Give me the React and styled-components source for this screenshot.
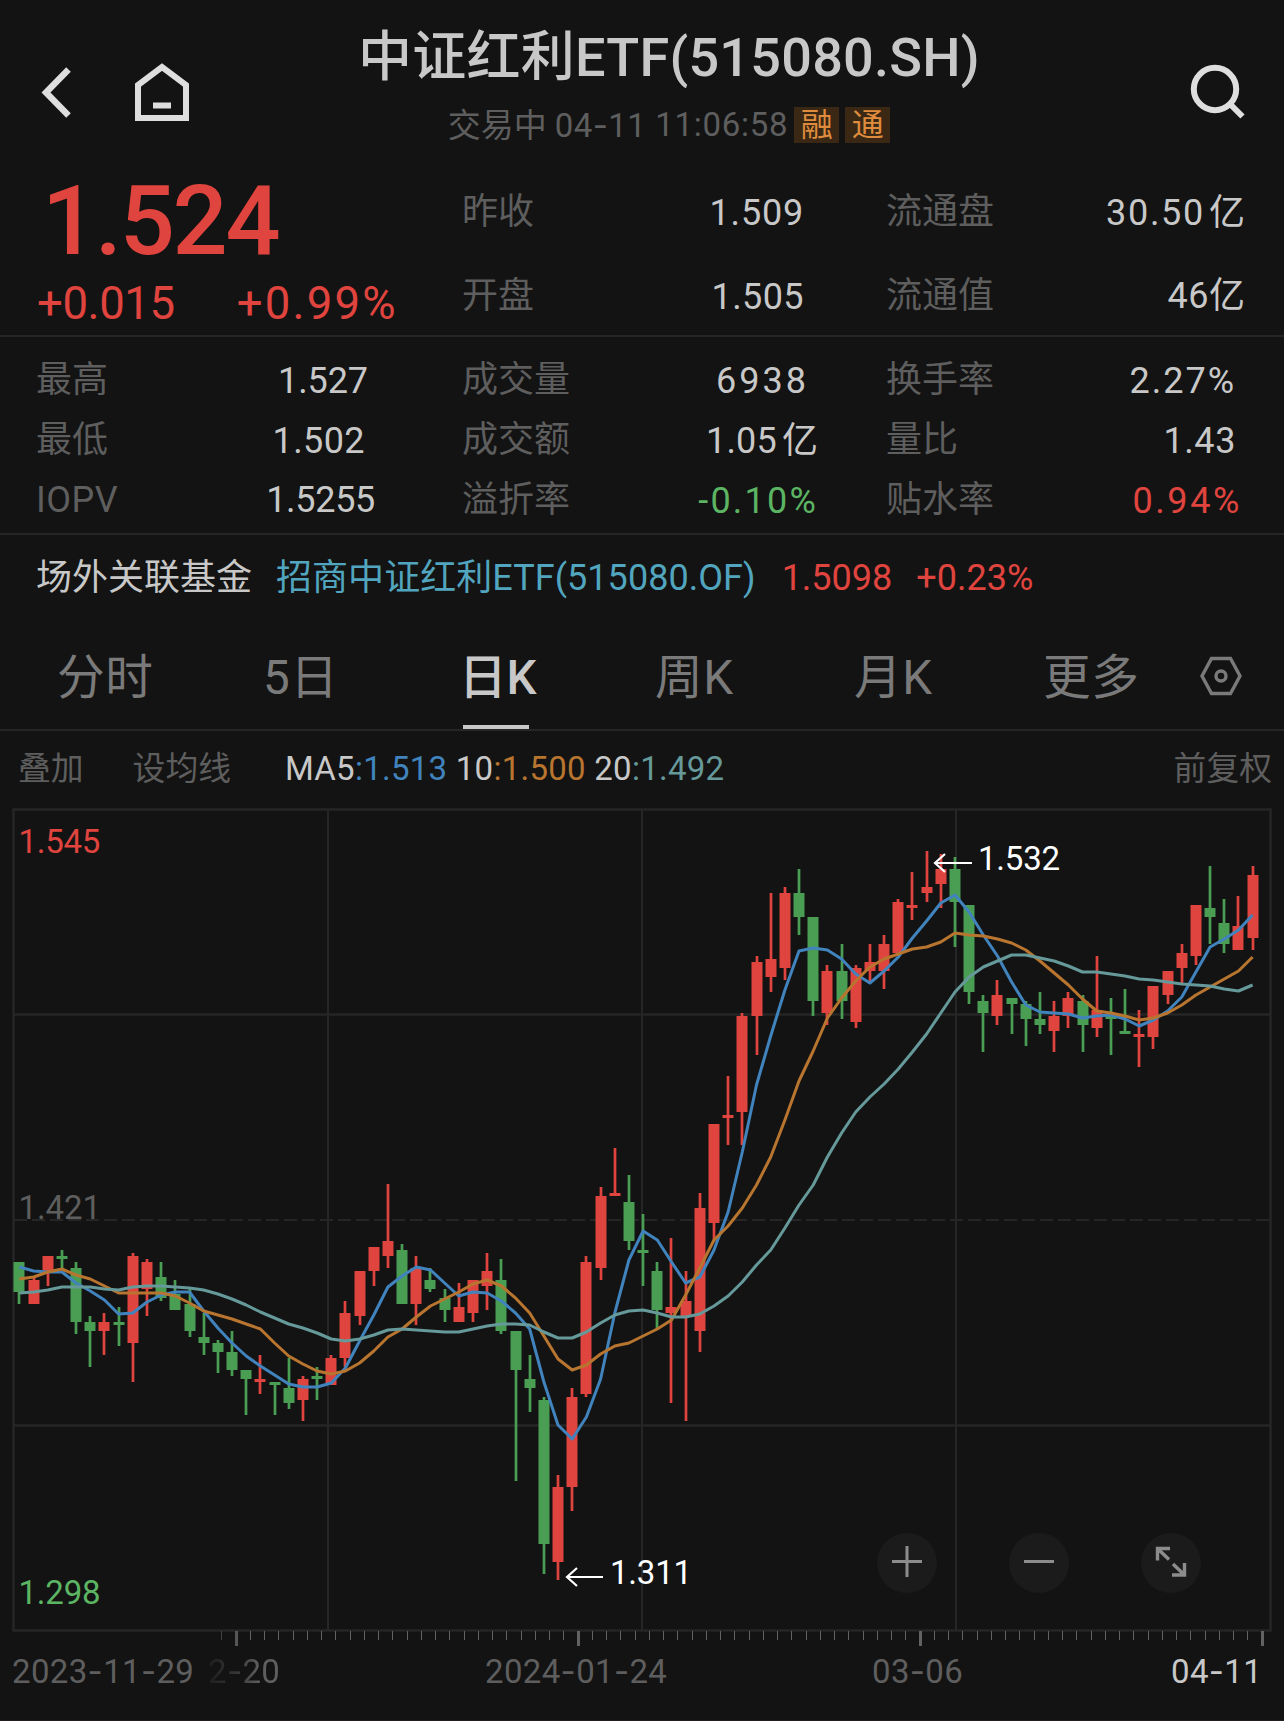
import React from "react";
import styled, { createGlobalStyle, ThemeProvider } from "styled-components";

const theme = {
  bg: "#131313",
  line: "#262626",
  text: "#c8c8c8",
  muted: "#5e5e5e",
  tab: "#7a7a7a",
  up: "#e0443e",
  down: "#4a9e54",
  downText: "#5cb563",
  link: "#52a5be",
  ma5: "#4183bd",
  ma10: "#b8752f",
  ma20: "#66999a",
};

const FONT = `Roboto, "Noto Sans CJK SC", sans-serif`;

const GlobalStyle = createGlobalStyle`
  * { box-sizing: border-box; }
  body {
    margin: 0;
    background: ${theme.bg};
  }
`;

const Page = styled.div`
  width: 1284px;
  height: 1721px;
  overflow: hidden;
  display: flex;
  flex-direction: column;
  background: ${({ theme }) => theme.bg};
  color: ${({ theme }) => theme.text};
  font-family: ${FONT};
  font-size: 36px;
  white-space: nowrap;
  border-bottom: 1px solid #241e1f;
`;

const Header = styled.header`
  height: 156px;
  display: grid;
  grid-template-columns: 220px 1fr 166px;
`;

const NavIcons = styled.div`
  display: flex;
  align-items: flex-start;
  gap: 63px;
  padding: 61px 0 0 40px;
`;

const SearchSlot = styled.div`
  padding: 61px 0 0 70px;
`;

const Titles = styled.div`
  display: flex;
  flex-direction: column;
  align-items: center;
  padding-top: 28px;
`;

const Title = styled.h1`
  margin: 0;
  font-size: 54px;
  line-height: 60px;
  font-weight: 500;
  letter-spacing: 0.25px;
`;

const Subtitle = styled.div`
  display: flex;
  align-items: center;
  margin-top: 19px;
  height: 36px;
  font-size: 33px;
  line-height: 38px;
  color: ${({ theme }) => theme.muted};
`;

const Hyphen = styled.span`
  font-family: Inter, sans-serif;
`;

const Status = styled.span`
  margin-right: 8px;
  padding-top: 1px;
`;

const Today = styled.span`
  letter-spacing: 0.4px;
`;

const Clock = styled.span`
  margin-left: 9px;
  letter-spacing: 0.7px;
`;

const Badge = styled.span`
  width: 45px;
  height: 36px;
  margin-left: 6px;
  text-align: center;
  font-size: 32px;
  line-height: 36px;
  background: #3b2814;
  color: #df8c3e;
`;

const Quote = styled.section`
  height: 181px;
  display: grid;
  grid-template-columns: 462px 424px 1fr;
  border-bottom: 2px solid ${({ theme }) => theme.line};
`;

const PriceBlock = styled.div`
  color: ${({ theme }) => theme.up};
`;

const Price = styled.div`
  padding: 10px 0 0 42px;
  font-size: 97px;
  line-height: 110px;
  font-weight: 500;
  letter-spacing: -2.2px;
`;

const Changes = styled.div`
  display: flex;
  gap: 62px;
  padding: 2.5px 0 0 37px;
  font-size: 45.5px;
  line-height: 50px;
`;

const Change = styled.span`
  letter-spacing: ${({ $spacing }) => $spacing}px;
`;

const QuoteColumn = styled.div`
  padding-top: 14px;
`;

const Stats = styled.section`
  height: 198px;
  padding: 13px 0 0 36px;
  display: grid;
  grid-template-columns: 426px 424px 1fr;
  grid-auto-rows: 60px;
  border-bottom: 2px solid ${({ theme }) => theme.line};
`;

const Cell = styled.div`
  height: ${({ $tall }) => ($tall ? 84 : 60)}px;
  display: flex;
  justify-content: space-between;
  align-items: center;
  line-height: 60px;
`;

const Label = styled.span`
  letter-spacing: ${({ $spacing }) => $spacing || 0}px;
  color: ${({ theme }) => theme.muted};
`;

const Value = styled.span`
  padding-top: ${({ $raised }) => ($raised ? 0 : 2)}px;
  margin-right: ${({ $inset }) => $inset}px;
  letter-spacing: ${({ $spacing }) => $spacing ?? 1}px;
  color: ${({ $tone, theme }) => ($tone ? theme[$tone] : theme.text)};
`;

const Unit = styled.span`
  margin-left: ${({ $gap }) => $gap || 0}px;
  letter-spacing: 0;
`;

const Related = styled.section`
  height: 86px;
  display: flex;
  align-items: center;
  padding-left: 36px;
  line-height: 50px;
`;

const FundLink = styled.a`
  margin-left: 24px;
  letter-spacing: 0.05px;
  color: ${({ theme }) => theme.link};
`;

const FundValue = styled.span`
  margin-left: ${({ $gap }) => $gap}px;
  color: ${({ theme }) => theme.up};
`;

const Tabs = styled.nav`
  height: 110px;
  display: grid;
  grid-template-columns: 206px 196px 196px 199px 189px 156px auto;
  padding-left: 57px;
  border-bottom: 2px solid ${({ theme }) => theme.line};
`;

const Tab = styled.div`
  position: relative;
  padding-top: 31px;
  font-size: 47.6px;
  line-height: 52px;
  color: ${({ $active, theme }) => ($active ? theme.text : theme.tab)};
  font-weight: ${({ $active }) => ($active ? 500 : 400)};
  letter-spacing: ${({ $active }) => ($active ? 0 : 0.6)}px;

  &::after {
    content: "";
    display: ${({ $active }) => ($active ? "block" : "none")};
    position: absolute;
    left: 4px;
    bottom: 0;
    width: 66px;
    height: 4px;
    background: ${({ theme }) => theme.text};
  }
`;

const TabIcon = styled.div`
  padding-top: 35px;
`;

const Toolbar = styled.div`
  height: 75px;
  display: flex;
  align-items: center;
  padding: 0 12px 0 18px;
  font-size: 33px;
  line-height: 40px;
  color: ${({ theme }) => theme.text};
`;

const Tool = styled.span`
  font-size: 32.8px;
  margin-right: ${({ $gap }) => $gap || 0}px;
  margin-left: ${({ $push }) => ($push ? "auto" : 0)};
  color: ${({ theme }) => theme.muted};
`;

const Ma = styled.span`
  margin-right: 8.5px;
  letter-spacing: 0.25px;

  b {
    font-weight: 400;
    color: ${({ $tone, theme }) => theme[$tone]};
  }
`;

const ChartArea = styled.section`
  position: relative;
  height: 847px;

  svg {
    display: block;
  }
`;

const ChartButtons = styled.div`
  position: absolute;
  left: 877px;
  top: 727px;
  display: flex;
  gap: 72px;
`;

const RoundButton = styled.button`
  width: 60px;
  height: 60px;
  padding: 0 0 2px;
  border: 0;
  border-radius: 50%;
  background: #1b1b1b;
  display: grid;
  place-items: center;
`;

const Dates = styled.div`
  display: grid;
  grid-template-columns: 196px 277px 387px 299px auto;
  padding-left: 12px;
  font-size: 33px;
  line-height: 36px;
  letter-spacing: 0.35px;
  color: ${({ theme }) => theme.muted};
`;

const DateLabel = styled.span`
  color: ${({ $current, theme }) => ($current ? theme.text : "inherit")};
  mask-image: ${({ $fade }) =>
    $fade ? "linear-gradient(90deg, rgba(0,0,0,.15), rgba(0,0,0,.5) 30px, #000 50px)" : "none"};
`;

// [direction, body top, body bottom, high, low]
const CANDLES = [
  ["d", 1262, 1292, 1262, 1304], ["u", 1280, 1304, 1278, 1304], ["u", 1256, 1273, 1256, 1286],
  ["d", 1256, 1259, 1250, 1270], ["d", 1268, 1322, 1262, 1334], ["d", 1322, 1331, 1316, 1367],
  ["u", 1322, 1331, 1313, 1355], ["d", 1322, 1325, 1307, 1346], ["u", 1256, 1343, 1253, 1382],
  ["u", 1262, 1289, 1259, 1316], ["d", 1277, 1298, 1262, 1301], ["d", 1294, 1310, 1280, 1310],
  ["d", 1304, 1331, 1288, 1337], ["d", 1337, 1343, 1313, 1355], ["d", 1343, 1352, 1340, 1373],
  ["d", 1352, 1370, 1331, 1376], ["d", 1370, 1379, 1370, 1415], ["u", 1379, 1382, 1355, 1394],
  ["d", 1382, 1385, 1382, 1415], ["d", 1388, 1403, 1358, 1409], ["u", 1379, 1400, 1376, 1421],
  ["d", 1376, 1379, 1367, 1400], ["u", 1358, 1385, 1355, 1385], ["u", 1313, 1358, 1301, 1367],
  ["u", 1271, 1316, 1271, 1325], ["u", 1247, 1271, 1247, 1286], ["u", 1241, 1256, 1184, 1268],
  ["d", 1250, 1304, 1244, 1304], ["u", 1268, 1304, 1256, 1325], ["d", 1280, 1289, 1268, 1292],
  ["d", 1298, 1310, 1289, 1322], ["u", 1307, 1322, 1283, 1322], ["u", 1280, 1313, 1280, 1322],
  ["u", 1271, 1286, 1253, 1310], ["d", 1280, 1331, 1259, 1334], ["d", 1331, 1370, 1331, 1481],
  ["d", 1379, 1388, 1355, 1412], ["d", 1400, 1544, 1397, 1574], ["u", 1487, 1562, 1475, 1580],
  ["u", 1397, 1487, 1388, 1511], ["u", 1262, 1394, 1256, 1397], ["u", 1196, 1268, 1187, 1280],
  ["u", 1193, 1196, 1148, 1196], ["d", 1202, 1241, 1175, 1250], ["d", 1250, 1253, 1214, 1286],
  ["d", 1271, 1310, 1262, 1330], ["u", 1307, 1313, 1238, 1403], ["u", 1301, 1317, 1271, 1421],
  ["u", 1208, 1331, 1193, 1352], ["u", 1124, 1223, 1124, 1242], ["u", 1115, 1118, 1076, 1145],
  ["u", 1016, 1112, 1013, 1145], ["u", 962, 1016, 956, 1055], ["u", 959, 977, 893, 992],
  ["u", 893, 968, 887, 980], ["d", 893, 917, 869, 935], ["d", 917, 1001, 917, 1016],
  ["u", 971, 1013, 965, 1025], ["d", 971, 1001, 944, 1019], ["u", 968, 1022, 965, 1028],
  ["u", 962, 971, 944, 981], ["u", 944, 971, 935, 989], ["u", 902, 953, 899, 955],
  ["u", 905, 908, 872, 920], ["u", 887, 893, 851, 902], ["u", 869, 884, 854, 908],
  ["d", 869, 902, 857, 947], ["d", 905, 992, 905, 1004], ["d", 1001, 1013, 995, 1052],
  ["u", 995, 1016, 980, 1025], ["d", 998, 1004, 998, 1034], ["d", 1004, 1019, 1001, 1046],
  ["d", 1019, 1025, 992, 1034], ["u", 1016, 1031, 1001, 1052], ["u", 998, 1016, 992, 1028],
  ["d", 1001, 1025, 995, 1052], ["u", 1010, 1028, 956, 1037], ["d", 1016, 1019, 998, 1055],
  ["d", 1031, 1034, 989, 1034], ["u", 1034, 1037, 1010, 1067], ["u", 986, 1037, 986, 1049],
  ["u", 971, 995, 971, 1004], ["u", 953, 968, 944, 983], ["u", 905, 956, 905, 965],
  ["d", 908, 917, 866, 944], ["d", 923, 944, 899, 953], ["u", 926, 950, 896, 950],
  ["u", 875, 938, 866, 950],
];

const MA5 = [
  1267, 1271, 1272, 1272, 1283, 1291, 1300, 1314, 1313, 1302, 1295, 1292, 1292, 1311, 1328, 1343,
  1356, 1366, 1375, 1384, 1387, 1387, 1383, 1368, 1341, 1315, 1287, 1276, 1267, 1270, 1283, 1296,
  1292, 1293, 1301, 1313, 1329, 1382, 1425, 1439, 1417, 1379, 1313, 1260, 1231, 1240, 1262, 1283,
  1277, 1250, 1212, 1152, 1085, 1036, 990, 951, 948, 950, 959, 974, 983, 971, 957, 938, 921, 903,
  895, 912, 935, 956, 982, 1005, 1012, 1013, 1014, 1018, 1016, 1015, 1019, 1026, 1020, 1011, 997,
  972, 947, 939, 930, 915,
];

const MA10 = [
  1279, 1277, 1272, 1269, 1275, 1279, 1286, 1293, 1293, 1293, 1293, 1296, 1303, 1311, 1315, 1319,
  1324, 1329, 1343, 1356, 1364, 1371, 1374, 1371, 1363, 1351, 1337, 1329, 1317, 1306, 1299, 1292,
  1284, 1280, 1286, 1298, 1313, 1336, 1359, 1370, 1365, 1354, 1346, 1343, 1336, 1329, 1320, 1295,
  1268, 1240, 1226, 1208, 1185, 1157, 1120, 1081, 1051, 1018, 998, 981, 967, 959, 954, 949, 947,
  942, 933, 935, 936, 939, 943, 950, 961, 973, 985, 999, 1011, 1013, 1016, 1020, 1018, 1013, 1005,
  995, 987, 979, 971, 957,
];

const MA20 = [
  1293, 1292, 1290, 1287, 1287, 1287, 1289, 1290, 1287, 1286, 1286, 1287, 1288, 1290, 1294, 1299,
  1305, 1312, 1318, 1324, 1328, 1333, 1339, 1341, 1339, 1335, 1330, 1329, 1330, 1331, 1332, 1332,
  1329, 1326, 1324, 1324, 1325, 1332, 1338, 1338, 1332, 1323, 1315, 1311, 1310, 1313, 1317, 1317,
  1314, 1306, 1296, 1282, 1265, 1250, 1228, 1205, 1185, 1157, 1133, 1112, 1097, 1084, 1069, 1052,
  1034, 1013, 992, 977, 967, 961, 955, 955, 958, 961, 966, 972, 972, 974, 976, 979, 980, 982, 984,
  985, 986, 989, 991, 985,
];

const STEP = 14.175;
const xAt = (i) => 19.4 + i * STEP;
const toPoints = (ys) => ys.map((y, i) => `${xAt(i).toFixed(1)},${y}`).join(" ");

const TICKS = Array.from({ length: 74 }, (_, i) => ({
  x: 235.6 + (i - 1) * 14.25,
  major: (i - 1) % 24 === 0,
}));

function DateText({ children }) {
  return children.split("-").map((part, i) => (
    <React.Fragment key={i}>
      {i > 0 && <Hyphen>-</Hyphen>}
      {part}
    </React.Fragment>
  ));
}

function Candle({ data, index }) {
  const [dir, top, bottom, high, low] = data;
  const fill = dir === "u" ? theme.up : theme.down;
  const x = Math.round(xAt(index));
  return (
    <g fill={fill}>
      <rect x={x - 1.35} y={high} width="2.7" height={low - high} />
      <rect x={x - 5.5} y={top} width="11" height={bottom - top} />
    </g>
  );
}

function KLineChart() {
  return (
    <svg width="1284" height="847" viewBox="0 806 1284 847" fontFamily="Roboto, sans-serif" fontSize="33">
      <defs>
        <linearGradient id="axisFade" gradientUnits="userSpaceOnUse" x1="190" x2="245" y1="0" y2="0">
          <stop offset="0" stopColor="#626262" stopOpacity="0" />
          <stop offset="1" stopColor="#626262" />
        </linearGradient>
      </defs>
      <g stroke={theme.line} fill="none">
        <rect x="13.5" y="809.5" width="1257" height="821" strokeWidth="2.5" />
        <path d="M328 810V1630M642 810V1630M956 810V1630" strokeWidth="2" />
        <path d="M14 1014.5H1270M14 1425.5H1270" strokeWidth="2.5" />
        <path d="M14 1220H1270" strokeWidth="2" strokeDasharray="13 5" />
      </g>
      <text x="18.5" y="853" letterSpacing="-0.3" fill={theme.up}>1.545</text>
      <text x="18.5" y="1218.5" letterSpacing="-0.1" fill={theme.muted}>1.421</text>
      <text x="18.5" y="1603.5" letterSpacing="-0.2" fill={theme.downText}>1.298</text>

      {CANDLES.map((c, i) => (
        <Candle key={i} data={c} index={i} />
      ))}
      <g fill="none" strokeWidth="3" strokeLinejoin="round">
        <polyline points={toPoints(MA5)} stroke={theme.ma5} />
        <polyline points={toPoints(MA10)} stroke={theme.ma10} />
        <polyline points={toPoints(MA20)} stroke={theme.ma20} />
      </g>

      <g stroke="#fff" strokeWidth="2.2" fill="none">
        <path d="M972 863H935M945 854L935 863L945 872" />
        <path d="M603 1577H567M577 1568L567 1577L577 1586" />
      </g>
      <text x="978" y="870" letterSpacing="-0.2" fill="#fff">1.532</text>
      <text x="610" y="1584" letterSpacing="-0.2" fill="#fff">1.311</text>

      {TICKS.map(({ x, major }, i) => (
        <rect
          key={i}
          x={Math.round(x) - (major ? 1 : 0)}
          y="1631"
          width={major ? 3 : 1}
          height={major ? 15 : 9}
          fill={x < 245 ? "url(#axisFade)" : "#626262"}
        />
      ))}
    </svg>
  );
}

function BackIcon() {
  return (
    <svg width="32" height="60" viewBox="0 0 32 60" fill="none" stroke="#dedede" strokeWidth="6.4">
      <path d="M28.5 8.5L6 31.5L28.5 54.5" />
    </svg>
  );
}

function HomeIcon() {
  return (
    <svg width="54" height="60" viewBox="0 0 54 60" fill="none" stroke="#dedede" strokeWidth="6">
      <path d="M3 57V24L27 6L51 24V57Z" />
      <path d="M18 44.5H36" />
    </svg>
  );
}

function SearchIcon() {
  return (
    <svg width="60" height="62" viewBox="0 0 60 62" fill="none" stroke="#dedede" strokeWidth="6">
      <circle cx="27" cy="28" r="21.2" />
      <path d="M41.5 42.5L54.5 55.5" />
    </svg>
  );
}

function SettingsIcon() {
  return (
    <svg width="44" height="40" viewBox="0 0 44 40" fill="none" stroke={theme.tab} strokeWidth="3.4">
      <path d="M12.5 2.5H31.5L41 20L31.5 37.5H12.5L3 20Z" />
      <circle cx="22" cy="20" r="5" />
    </svg>
  );
}

const TABS = ["分时", "5日", "日K", "周K", "月K", "更多"];

export default function App() {
  return (
    <ThemeProvider theme={theme}>
      <GlobalStyle />
      <Page>
        <Header>
          <NavIcons>
            <BackIcon />
            <HomeIcon />
          </NavIcons>
          <Titles>
            <Title>中证红利ETF(515080.SH)</Title>
            <Subtitle>
              <Status>交易中</Status>
              <Today><DateText>04-11</DateText></Today>
              <Clock>11:06:58</Clock>
              <Badge>融</Badge>
              <Badge>通</Badge>
            </Subtitle>
          </Titles>
          <SearchSlot>
            <SearchIcon />
          </SearchSlot>
        </Header>

        <Quote>
          <PriceBlock>
            <Price>1.524</Price>
            <Changes>
              <Change $spacing={-0.4}>+0.015</Change>
              <Change $spacing={2.2}>+0.99%</Change>
            </Changes>
          </PriceBlock>
          <QuoteColumn>
            <Cell $tall><Label>昨收</Label><Value $inset={82} $spacing={0.8}>1.509</Value></Cell>
            <Cell $tall><Label>开盘</Label><Value $inset={82} $spacing={0.4}>1.505</Value></Cell>
          </QuoteColumn>
          <QuoteColumn>
            <Cell $tall>
              <Label>流通盘</Label>
              <Value $inset={39} $spacing={1.7}>30.50<Unit $gap={4}>亿</Unit></Value>
            </Cell>
            <Cell $tall>
              <Label>流通值</Label>
              <Value $inset={39} $spacing={0.5} $raised>46<Unit>亿</Unit></Value>
            </Cell>
          </QuoteColumn>
        </Quote>

        <Stats>
          <Cell><Label>最高</Label><Value $inset={94} $spacing={-0.1}>1.527</Value></Cell>
          <Cell><Label>成交量</Label><Value $inset={77} $spacing={3}>6938</Value></Cell>
          <Cell><Label>换手率</Label><Value $inset={48} $spacing={2}>2.27%</Value></Cell>

          <Cell><Label>最低</Label><Value $inset={97} $spacing={0.4}>1.502</Value></Cell>
          <Cell><Label>成交额</Label><Value $inset={68} $spacing={0.2}>1.05<Unit $gap={5}>亿</Unit></Value></Cell>
          <Cell><Label>量比</Label><Value $inset={48} $spacing={0.6}>1.43</Value></Cell>

          <Cell><Label $spacing={0.5}>IOPV</Label><Value $inset={87} $spacing={-0.3} $raised>1.5255</Value></Cell>
          <Cell><Label>溢折率</Label><Value $inset={68} $spacing={2.2} $tone="downText">-0.10%</Value></Cell>
          <Cell><Label>贴水率</Label><Value $inset={42} $spacing={2.6} $tone="up">0.94%</Value></Cell>
        </Stats>

        <Related>
          <span>场外关联基金</span>
          <FundLink>招商中证红利ETF(515080.OF)</FundLink>
          <FundValue $gap={26}>1.5098</FundValue>
          <FundValue $gap={24}>+0.23%</FundValue>
        </Related>

        <Tabs>
          {TABS.map((name) => (
            <Tab key={name} $active={name === "日K"}>{name}</Tab>
          ))}
          <TabIcon>
            <SettingsIcon />
          </TabIcon>
        </Tabs>

        <Toolbar>
          <Tool $gap={49}>叠加</Tool>
          <Tool $gap={54}>设均线</Tool>
          <Ma $tone="ma5">MA5<b>:1.513</b></Ma>
          <Ma $tone="ma10">10<b>:1.500</b></Ma>
          <Ma $tone="ma20">20<b>:1.492</b></Ma>
          <Tool $push>前复权</Tool>
        </Toolbar>

        <ChartArea>
          <KLineChart />
          <ChartButtons>
            <RoundButton aria-label="放大">
              <svg width="32" height="32" viewBox="0 0 32 32" stroke="#8c8c8c" strokeWidth="3">
                <path d="M16 0V31M1 15.5H31" />
              </svg>
            </RoundButton>
            <RoundButton aria-label="缩小">
              <svg width="32" height="32" viewBox="0 0 32 32" stroke="#8c8c8c" strokeWidth="3">
                <path d="M1 15.5H31" />
              </svg>
            </RoundButton>
            <RoundButton aria-label="全屏">
              <svg width="32" height="32" viewBox="0 0 32 32" fill="none" stroke="#8c8c8c" strokeWidth="3.4">
                <path d="M2.5 14.5V2.5H15M2.5 2.5L14 13.5M29.5 17V29H17M29.5 29L18 18" />
              </svg>
            </RoundButton>
          </ChartButtons>
        </ChartArea>

        <Dates>
          <DateLabel><DateText>2023-11-29</DateText></DateLabel>
          <DateLabel $fade><DateText>2-20</DateText></DateLabel>
          <DateLabel><DateText>2024-01-24</DateText></DateLabel>
          <DateLabel><DateText>03-06</DateText></DateLabel>
          <DateLabel $current><DateText>04-11</DateText></DateLabel>
        </Dates>
      </Page>
    </ThemeProvider>
  );
}
